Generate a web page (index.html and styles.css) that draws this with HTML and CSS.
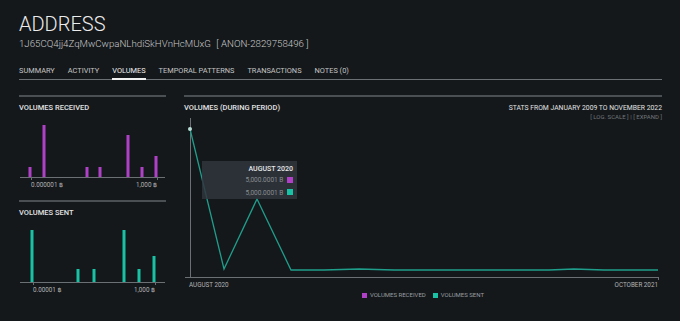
FILE: index.html
```html
<!DOCTYPE html>
<html lang="en">
<head>
    <meta charset="UTF-8">
    <title>Address volumes</title>
    <link rel="stylesheet" href="styles.css">
</head>
<body>
<div class="page">
    <h1 class="title">ADDRESS</h1>
    <p class="addr">1J65CQ4jj4ZqMwCwpaNLhdiSkHVnHcMUxG <span class="anon">[ ANON-2829758496 ]</span></p>

    <nav class="tabs">
        <a class="tab">SUMMARY</a>
        <a class="tab">ACTIVITY</a>
        <a class="tab active">VOLUMES</a>
        <a class="tab">TEMPORAL PATTERNS</a>
        <a class="tab">TRANSACTIONS</a>
        <a class="tab">NOTES (0)</a>
    </nav>

    <div class="main">
        <aside class="side">
            <section class="mini">
                <h5 class="label">VOLUMES RECEIVED</h5>
                <svg class="mini-chart" width="147" height="80" viewBox="0 0 147 80">
                    <g fill="#b040c8">
                        <rect x="9.5" y="52" width="3" height="10"/>
                        <rect x="23.5" y="10" width="3" height="52"/>
                        <rect x="66.5" y="52" width="3" height="10"/>
                        <rect x="79.5" y="52" width="3" height="10"/>
                        <rect x="107.5" y="20" width="3" height="42"/>
                        <rect x="121.5" y="52" width="3" height="10"/>
                        <rect x="135.5" y="41" width="3" height="21"/>
                    </g>
                    <line x1="1" y1="62.5" x2="146" y2="62.5" stroke="#6b7075"/>
                    <line x1="12.5" y1="62" x2="12.5" y2="65" stroke="#6b7075"/>
                    <line x1="138.5" y1="62" x2="138.5" y2="65" stroke="#6b7075"/>
                    <text x="12" y="72" class="tick">0.000001 ฿</text>
                    <text x="138" y="72" class="tick" text-anchor="end">1,000 ฿</text>
                </svg>
            </section>
            <section class="mini">
                <h5 class="label">VOLUMES SENT</h5>
                <svg class="mini-chart" width="147" height="80" viewBox="0 0 147 80">
                    <g fill="#19c2a4">
                        <rect x="11.5" y="10" width="3" height="52"/>
                        <rect x="57.5" y="49" width="3" height="13"/>
                        <rect x="73.5" y="49" width="3" height="13"/>
                        <rect x="103.5" y="10" width="3" height="52"/>
                        <rect x="118.5" y="49" width="3" height="13"/>
                        <rect x="133.5" y="36" width="3" height="26"/>
                    </g>
                    <line x1="1" y1="62.5" x2="146" y2="62.5" stroke="#6b7075"/>
                    <line x1="14.5" y1="62" x2="14.5" y2="65" stroke="#6b7075"/>
                    <line x1="136.5" y1="62" x2="136.5" y2="65" stroke="#6b7075"/>
                    <text x="14" y="72" class="tick">0.00001 ฿</text>
                    <text x="136" y="72" class="tick" text-anchor="end">1,000 ฿</text>
                </svg>
            </section>
        </aside>

        <section class="period">
            <div class="period-head">
                <h5 class="label">VOLUMES (DURING PERIOD)</h5>
                <div class="stats">
                    <div class="stats-range">STATS FROM JANUARY 2009 TO NOVEMBER 2022</div>
                    <div class="stats-links">[ LOG. SCALE ] | [ EXPAND ]</div>
                </div>
            </div>
            <div class="chart-wrap">
                <svg class="big-chart" width="478" height="175" viewBox="0 0 478 175">
                    <line x1="6.5" y1="2" x2="6.5" y2="161" stroke="#6b7075"/>
                    <line x1="1" y1="161.5" x2="475" y2="161.5" stroke="#6b7075"/>
                    <line x1="474.5" y1="161" x2="474.5" y2="164" stroke="#6b7075"/>
                    <polyline fill="none" stroke="#1f9e8c" stroke-width="1.3"
                        points="6,13 40,153 73,83 107,154 140,154 175,153 210,154 260,154 320,154 365,154 390,153 420,154 474,154"/>
                    <circle cx="6" cy="13" r="2" fill="#b9dcd6"/>
                    <text x="5" y="171" class="tick">AUGUST 2020</text>
                    <text x="474" y="171" class="tick" text-anchor="end">OCTOBER 2021</text>
                </svg>
                <div class="tooltip">
                    <div class="tip-title">AUGUST 2020</div>
                    <div class="tip-row">5,000.0001 B <span class="sq recv"></span></div>
                    <div class="tip-row">5,000.0001 B <span class="sq sent"></span></div>
                </div>
            </div>
            <div class="legend">
                <span class="legend-item"><span class="sq recv"></span>VOLUMES RECEIVED</span>
                <span class="legend-item"><span class="sq sent"></span>VOLUMES SENT</span>
            </div>
        </section>
    </div>
</div>
</body>
</html>
```

FILE: styles.css
```css
body {
    margin: 0;
    background-color: #14181b;
    color: #d6d6d6;
    font-family: Roboto, "Liberation Sans", sans-serif;
}

.page {
    padding: 13px 18px 0 19px;
}

.title {
    margin: 0;
    font-size: 20px;
    font-weight: 300;
    line-height: 22px;
    color: #ececec;
}

.addr {
    margin: 3px 0 0;
    font-size: 9.7px;
    font-weight: 300;
    line-height: 12px;
    color: #c9c9c9;
}

.anon {
    margin-left: 3px;
}

.tabs {
    display: flex;
    gap: 13px;
    margin-top: 16px;
    border-bottom: 1px solid #6b7075;
}

.tab {
    font-size: 7.4px;
    font-weight: 400;
    color: #c4c4c4;
    padding-bottom: 3px;
    border-bottom: 2px solid transparent;
    margin-bottom: -1px;
}

.tab.active {
    color: #f0f0f0;
    border-bottom-color: #f2f2f2;
}

.main {
    display: flex;
    gap: 18px;
    margin-top: 15px;
}

.side {
    width: 147px;
    display: flex;
    flex-direction: column;
    gap: 5px;
}

.mini {
    border-top: 2px solid #4a4f54;
}

.label {
    margin: 0;
    padding-top: 6px;
    font-size: 7.5px;
    font-weight: 500;
    color: #e2e2e2;
    line-height: 10px;
}

.mini-chart {
    display: block;
    margin-top: 2px;
}

.tick {
    font-family: Roboto, "DejaVu Sans", sans-serif;
    font-size: 6.3px;
    fill: #b4b4b4;
}

.period {
    flex: 1;
    border-top: 2px solid #4a4f54;
}

.period-head {
    display: flex;
    justify-content: space-between;
    height: 19px;
}

.stats {
    text-align: right;
    padding-top: 6px;
}

.stats-range {
    font-size: 6.8px;
    font-weight: 400;
    line-height: 10px;
    color: #e2e2e2;
}

.stats-links {
    font-size: 6px;
    line-height: 8px;
    color: #737779;
}

.chart-wrap {
    position: relative;
}

.big-chart {
    display: block;
}

.tooltip {
    position: absolute;
    left: 18px;
    top: 45px;
    width: 95px;
    height: 38px;
    box-sizing: border-box;
    padding: 3px 4px 0 0;
    background-color: rgba(48, 54, 61, 0.85);
    text-align: right;
}

.tip-title {
    font-size: 7px;
    font-weight: 500;
    color: #e8e8e8;
    line-height: 10px;
}

.tip-row {
    font-size: 6.5px;
    color: #8a8e91;
    line-height: 12.5px;
}

.sq {
    display: inline-block;
    width: 5px;
    height: 5px;
    vertical-align: -0.5px;
}

.tip-row .sq {
    width: 6px;
    height: 6px;
    margin-left: 2px;
}

.sq.recv {
    background-color: #b040c8;
}

.sq.sent {
    background-color: #19c2a4;
}

.legend {
    display: flex;
    justify-content: center;
    gap: 7px;
    font-size: 6px;
    color: #9a9ea1;
}

.legend-item .sq {
    margin-right: 3px;
}
```
